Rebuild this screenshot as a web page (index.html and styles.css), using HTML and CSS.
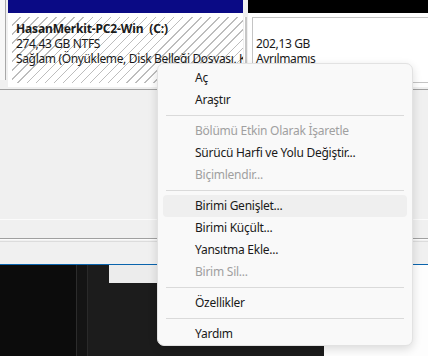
FILE: index.html
```html
<!DOCTYPE html>
<html lang="tr">
<head>
  <meta charset="UTF-8" />
  <meta name="viewport" content="width=device-width, initial-scale=1.0"/>
  <title>Disk Yönetimi</title>
  <link rel="stylesheet" href="styles.css">
</head>
<body>
  <div class="screen">
    <div class="volumes">
      <div class="edge"></div>
      <div class="part part-main">
        <div class="part-bar"></div>
        <div class="part-body">
          <div class="part-inner hatched">
            <div class="part-name">HasanMerkit-PC2-Win&nbsp; (C:)</div>
            <div>274,43 GB NTFS</div>
            <div>Sağlam (Önyükleme, Disk Belleği Dosyası, Kilitlenme)</div>
          </div>
        </div>
      </div>
      <div class="part-gap"></div>
      <div class="part part-free">
        <div class="part-bar"></div>
        <div class="part-body">
          <div class="part-inner">
            <div>&nbsp;</div>
            <div>202,13 GB</div>
            <div>Ayrılmamış</div>
          </div>
        </div>
      </div>
    </div>

    <div class="pane"></div>
    <div class="band"></div>
    <div class="band-low"></div>

    <div class="taskbar">
      <div class="tb-col tb-first"></div>
      <div class="tb-col tb-second"></div>
      <div class="tb-rest">
        <div class="tb-tab"></div>
      </div>
      <div class="tb-light"></div>
    </div>

    <ul class="menu">
      <li>Aç</li>
      <li>Araştır</li>
      <li class="sep"></li>
      <li class="off">Bölümü Etkin Olarak İşaretle</li>
      <li>Sürücü Harfi ve Yolu Değiştir...</li>
      <li class="off">Biçimlendir...</li>
      <li class="sep"></li>
      <li class="hover">Birimi Genişlet...</li>
      <li>Birimi Küçült...</li>
      <li>Yansıtma Ekle...</li>
      <li class="off">Birim Sil...</li>
      <li class="sep"></li>
      <li>Özellikler</li>
      <li class="sep"></li>
      <li>Yardım</li>
    </ul>
  </div>
</body>
</html>
```

FILE: styles.css
```css
body {
  margin: 0;
  padding: 0;
  font-family: 'Noto Sans', 'Open Sans', sans-serif;
  color: #1a1a1a;
  background: #f0f0f0;
}
.screen {
  position: relative;
  width: 428px;
  height: 356px;
  overflow: hidden;
}

/* disk strip */
.volumes {
  display: flex;
  height: 89px;
  background: #f0f0f0;
  border-bottom: 1px solid #a0a0a0;
}
.edge {
  width: 5px;
  height: 80px;
  background: #f7f7f7;
  border-right: 1px solid #a8a8a8;
  margin-right: 2px;
}
.part {
  display: flex;
  flex-direction: column;
}
.part-main {
  width: 235px;
}
.part-free {
  flex: 1;
}
.part-bar {
  height: 13px;
  background: #0a0a85;
}
.part-free .part-bar {
  background: #000;
}
.part-body {
  height: 70px;
  padding: 4px 0 0 4px;
  background: #fff;
}
.part-inner {
  height: 66px;
  padding: 4px 0 0 4px;
  box-sizing: border-box;
  font-size: 12px;
  line-height: 15px;
  letter-spacing: -0.35px;
  white-space: nowrap;
  overflow: hidden;
}
.part-free .part-inner {
  border: 1px solid #c4c4c4;
  border-right: none;
  padding: 3px 0 0 3px;
}
.hatched {
  background: repeating-linear-gradient(135deg, #fff 0 5.4px, #bdbdbd 5.4px 6.4px);
}
.part-name {
  font-weight: bold;
  letter-spacing: -0.15px;
}
.part-gap {
  width: 2px;
  margin: 17px 1px 0;
  height: 72px;
  background: #c6c6c6;
  border-left: 1px solid #fff;
}

/* lower panes */
.pane {
  height: 129px;
  border-bottom: 1px solid #fbfbfb;
}
.band {
  height: 18px;
  border-bottom: 1px solid #a0a0a0;
}
.band-low {
  height: 24px;
  border-top: 1px solid #fbfbfb;
  border-bottom: 1px solid #0a64ad;
  background: linear-gradient(#f0f0f0 0 1px, #dcdcdc 1px 2px, #f0f0f0 2px);
}
.taskbar {
  display: flex;
  height: 91px;
}
.tb-first {
  width: 76px;
  background: #0c0c0c;
  border-right: 1px solid #2c2c2c;
}
.tb-second {
  width: 10px;
  background: #141414;
  border-right: 1px solid #2a2a2a;
}
.tb-rest {
  width: 236px;
  background: #1c1c1c;
}
.tb-tab {
  width: 120px;
  height: 18px;
  margin-left: 21px;
  background: #ececec;
}
.tb-light {
  flex: 1;
  background: #fdfdfd;
}

/* context menu */
.menu {
  position: absolute;
  left: 157px;
  top: 63px;
  width: 254px;
  margin: 0;
  padding: 3px 0 0;
  list-style: none;
  background: #f9f9f9;
  border: 1px solid #e2e2e2;
  border-radius: 7px;
  box-shadow: 0 3px 10px rgba(0,0,0,0.14);
  font-size: 12px;
  letter-spacing: -0.25px;
}
.menu li {
  height: 22px;
  line-height: 22px;
  margin: 0 5px;
  padding-left: 32px;
  border-radius: 4px;
  white-space: nowrap;
}
.menu li.off {
  color: #a0a0a0;
}
.menu li.hover {
  background: #efefef;
}
.menu li.sep {
  height: 1px;
  margin: 4px 8px;
  padding: 0;
  border-radius: 0;
  background: #dadada;
}
```
